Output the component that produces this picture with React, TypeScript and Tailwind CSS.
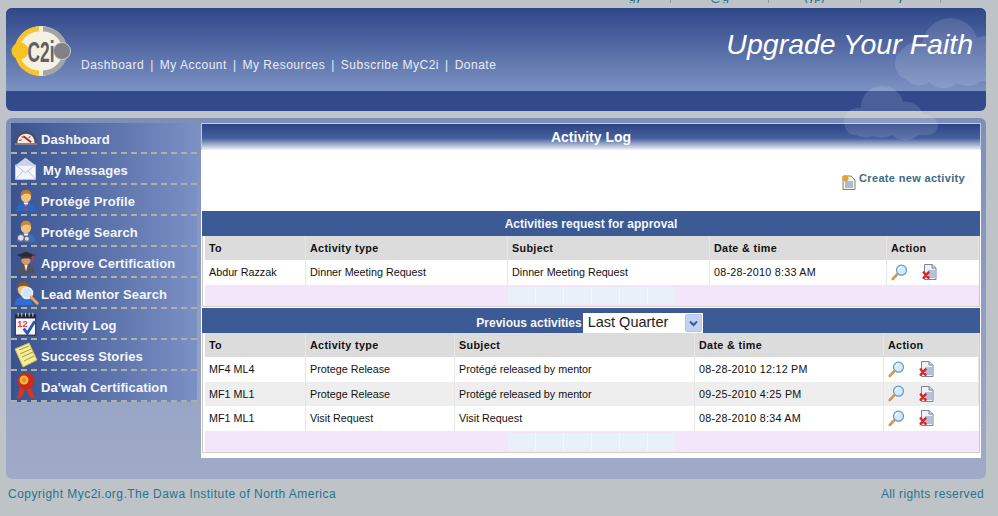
import React from "react";

const Magnifier = () => (
  <svg width="17" height="17" viewBox="0 0 17 17">
    <circle cx="10.5" cy="6.2" r="5" fill="#d5e9fa" stroke="#5a9ccf" strokeWidth="1.2" />
    <path d="M7.5 6a3 3 0 0 1 3-3" stroke="#fff" strokeWidth="1.2" fill="none" />
    <path d="M6.5 10 L1.8 15" stroke="#c79a5a" strokeWidth="2.6" strokeLinecap="round" />
  </svg>
);

const DocDelete = () => (
  <svg width="15" height="16" viewBox="0 0 15 16">
    <path d="M2.5 .5h7.5l4 3.5v11.5H2.5z" fill="#eef1f6" stroke="#7d8699" strokeWidth="1" />
    <path d="M10 .5V4h4" fill="#cdd3df" stroke="#7d8699" strokeWidth="1" />
    <rect x="6" y="6" width="7" height="8" fill="#b4c1d8" />
    <path d="M1.8 8.5l4.6 5.2M6.4 8.5l-4.6 5.2" stroke="#d8262c" strokeWidth="2.6" strokeLinecap="round" />
  </svg>
);

const person = (shirt: string, hair: string) => (
  <>
    <path d="M3 27c0-7 4-10 11-10s11 3 11 10z" fill={shirt} />
    <path d="M11 17l3 5 3-5z" fill="#fff" />
    <path d="M13.2 19h1.6l.6 7h-2.8z" fill="#c8403a" />
    <ellipse cx="14" cy="10" rx="6" ry="7" fill="#f3c27e" />
    <path d="M8 10c-1-6 3-8 6-8s7 2 6 7c-2-3-8-4-12 1z" fill={hair} />
  </>
);

const icons: Record<string, React.ReactNode> = {
  gauge: (
    <svg width="24" height="26" viewBox="0 0 28 28">
      <path d="M1 21C1 11 7 6 14 6s13 5 13 15z" fill="#4a4f5c" />
      <path d="M4 20C4 13 8 9 14 9s10 4 10 11z" fill="#f2ebe0" />
      <path d="M6 17l3-1M9 12l2 2M19 12l-2 2" stroke="#a33" strokeWidth="1.2" />
      <path d="M20 19l-9-7" stroke="#b22222" strokeWidth="2" />
      <rect x="1" y="20" width="26" height="2" fill="#888" />
    </svg>
  ),
  mail: (
    <svg width="23" height="25" viewBox="0 0 26 30">
      <path d="M1 11L13 2l12 9z" fill="#c9d3ea" />
      <rect x="1" y="11" width="24" height="17" fill="#f3f5fb" stroke="#ccd5ea" />
      <path d="M1 11l12 9 12-9M1 28l9-10M25 28l-9-10" stroke="#aeb9d6" strokeWidth="1" fill="none" />
    </svg>
  ),
  profile: <svg width="24" height="28" viewBox="0 0 28 28">{person("#2a67c8", "#b8792b")}</svg>,
  search: (
    <svg width="24" height="28" viewBox="0 0 28 28">
      {person("#3a6fc0", "#c58a33")}
      <circle cx="8" cy="22" r="4" fill="#dde" stroke="#556" />
      <circle cx="15" cy="23" r="3" fill="#dde" stroke="#556" />
    </svg>
  ),
  grad: (
    <svg width="24" height="28" viewBox="0 0 28 28">
      <path d="M4 27c0-7 4-10 10-10s10 3 10 10z" fill="#55525a" />
      <path d="M12 17h4l-2 8z" fill="#eee" />
      <ellipse cx="14" cy="11" rx="5.5" ry="6.5" fill="#d79a64" />
      <path d="M3 6l11-4 11 4-11 4z" fill="#2d2b30" />
      <path d="M8 8v3c4-2 8-2 12 0V8z" fill="#3c3940" />
      <path d="M22 6v7" stroke="#d33" strokeWidth="1.3" />
    </svg>
  ),
  lead: (
    <svg width="26" height="28" viewBox="0 0 28 28">
      <path d="M1 27c0-7 4-9 9-9s10 2 10 9z" fill="#2f6fd0" />
      <ellipse cx="10" cy="10" rx="6" ry="7" fill="#f3c27e" />
      <path d="M4 9c-1-5 3-7 6-7s7 2 6 6c-3-2-8-3-12 1z" fill="#8a5a26" />
      <circle cx="14" cy="14" r="6" fill="#cfe6fa" stroke="#eef" strokeWidth="1.5" />
      <path d="M18.5 18.5L25 25" stroke="#e8a860" strokeWidth="3.2" strokeLinecap="round" />
    </svg>
  ),
  cal: (
    <svg width="23" height="24" viewBox="0 0 24 26">
      <rect x="1" y="3" width="22" height="22" fill="#f7f7fb" stroke="#223" />
      <rect x="1" y="3" width="22" height="4" fill="#1d2238" />
      <path d="M4 1v4M8 1v4M12 1v4M16 1v4M20 1v4" stroke="#ddd" strokeWidth="1" />
      <text x="3" y="16" fontSize="10" fontWeight="700" fontFamily="Liberation Sans" fill="#e2422b">12</text>
      <path d="M10 18l4 5 8-13" stroke="#2756b5" strokeWidth="3" fill="none" />
    </svg>
  ),
  note: (
    <svg width="24" height="26" viewBox="0 0 24 26">
      <path d="M1 7L15 1l8 17-14 7z" fill="#f5ec9c" stroke="#c9bb58" />
      <path d="M5 8l10-4M6 12l11-5M8 15l11-5M10 19l10-5" stroke="#a99b3c" strokeWidth="1" />
    </svg>
  ),
  ribbon: (
    <svg width="22" height="28" viewBox="0 0 22 28">
      <path d="M5 15L2 27l5-2 3-8zM16 15l4 12-5-2-4-8z" fill="#d8361f" />
      <circle cx="11" cy="9" r="8.5" fill="#c92a1a" />
      <circle cx="9" cy="8" r="4.5" fill="#f0b43a" />
      <circle cx="9" cy="8" r="2" fill="#e88a1e" />
    </svg>
  ),
};

const menu: [string, string, string][] = [
  ["gauge", "Dashboard", "w-[30px] pl-[3px]"],
  ["mail", "My Messages", "w-[32px] pl-[3px]"],
  ["profile", "Protégé Profile", "w-[30px] pl-[3px]"],
  ["search", "Protégé Search", "w-[30px] pl-[3px]"],
  ["grad", "Approve Certification", "w-[30px] pl-[3px]"],
  ["lead", "Lead Mentor Search", "w-[30px] pl-[3px]"],
  ["cal", "Activity Log", "w-[30px] pl-[3px]"],
  ["note", "Success Stories", "w-[30px] pl-[3px]"],
  ["ribbon", "Da'wah Certification", "w-[30px] pl-[4px]"],
];

const Logo = () => (
  <svg width="62" height="52" viewBox="0 0 62 52" className="shrink-0">
    <circle cx="31" cy="26" r="25" fill="#f4f1e2" />
    <path d="M29 4A22 22 0 0 0 29 48" fill="none" stroke="#f6c42c" strokeWidth="5" />
    <path d="M33 4A22 22 0 0 1 33 48" fill="none" stroke="#a3a5a8" strokeWidth="5" />
    <circle cx="10" cy="26" r="8.5" fill="#f7c322" />
    <circle cx="52" cy="26" r="8.5" fill="#7f8184" stroke="#c9cacb" />
    <text x="31" y="37" textAnchor="middle" fontFamily="Liberation Sans Narrow, Liberation Sans" fontWeight="700" fontSize="29" fill="#5f6164" textLength="27" lengthAdjust="spacingAndGlyphs">C2i</text>
  </svg>
);

const Pager = () => (
  <div className="flex h-[21px] items-center bg-[#f3e6fb] pl-[303px]">
    <div className="flex h-[17px] gap-px bg-[#f6f6fc]">
      {[0, 1, 2, 3, 4, 5].map((i) => (
        <div key={i} className="w-[27px] bg-[#e8f0fa]" />
      ))}
    </div>
  </div>
);

const Cell = ({ children, head, tint, wide }: { children?: React.ReactNode; head?: boolean; tint?: boolean; wide?: boolean }) => (
  <div
    className={`flex items-center border-r border-[#e6e6e6] pl-[4px] last:border-r-0 ${
      head ? "h-[24px] bg-[#dcdcdc] pt-px font-bold tracking-[0.35px]" : `h-[24.5px] ${tint ? "bg-[#eeeeee]" : "bg-white"}`
    } ${wide ? "tracking-[0.25px]" : ""}`}
  >
    {children}
  </div>
);

const Actions = () => (
  <div className="flex items-center gap-[14px]">
    <Magnifier />
    <DocDelete />
  </div>
);

const Table = ({ cols, rows, heads }: { cols: string; rows: string[][]; heads: string[] }) => (
  <div className="border-x border-b border-x-[#c9c9c9] border-b-[#d8cfc4] pl-[2px] text-[10.75px] text-[#111]">
    <div className={`grid ${cols}`}>
      {heads.map((h) => (
        <Cell head key={h}>{h}</Cell>
      ))}
      {rows.map((r, i) =>
        [...r, ""].map((c, j) => (
          <Cell key={`${i}-${j}`} tint={i === 1} wide={j === 3}>
            {j === 4 ? <Actions /> : c}
          </Cell>
        ))
      )}
    </div>
    <Pager />
  </div>
);

const heads = ["To", "Activity type", "Subject", "Date & time", "Action"];

const Crumb = ({ w, text }: { w: string; text: string }) => (
  <div className={`${w} h-[3px] overflow-hidden border-r border-[#8f989c] text-center text-[12px] leading-[12px] text-[#27667a]`}>
    <div className="-mt-[9px]">{text}</div>
  </div>
);

export default function App() {
  return (
    <div className="relative flex h-[516px] w-[998px] flex-col overflow-hidden bg-[#bdc3c7] font-['Liberation_Sans',sans-serif]">
      <div className="flex h-[8px] items-start pl-[600px]">
        <Crumb w="w-[71px]" text="gy" />
        <Crumb w="w-[98px]" text="@g" />
        <Crumb w="w-[92px]" text="(yp)" />
        <Crumb w="w-[80px]" text="y" />
      </div>

      <header className="mx-[6px] h-[103px] w-[980px] shrink-0 overflow-hidden rounded-[6px] bg-[#324a8c]">
        <div className="flex h-[83px] items-start justify-between bg-[linear-gradient(to_bottom,#2f4689,#7c92c3)] pl-[4px] pr-[13px]">
          <div className="flex items-end pt-[17px]">
            <Logo />
            <nav className="mb-[5px] ml-[9px] flex gap-[6px] text-[12px] leading-[14px] tracking-[0.5px] text-[#e8edf6]">
              <span>Dashboard</span><span>|</span><span>My Account</span><span>|</span><span>My Resources</span><span>|</span><span>Subscribe MyC2i</span><span>|</span><span>Donate</span>
            </nav>
          </div>
          <div className="pt-[18px] text-[28.5px] italic leading-[36px] text-white">Upgrade Your Faith</div>
        </div>
      </header>

      <main className="mx-[6px] mt-[7px] flex h-[361px] w-[980px] shrink-0 items-start gap-[4px] rounded-[6px] bg-[linear-gradient(to_bottom,#7d8fb9,#a0abc8)] pl-[5px] pt-[5px]">
        <aside className="w-[186px] shrink-0">
          {menu.map(([ic, label, box]) => (
            <div
              key={label}
              className="flex h-[31px] items-center border-b-2 border-dashed border-b-[#adb1a2] bg-[linear-gradient(to_right,#3a5390,#7b90c4)] text-[13px] font-bold tracking-[0.1px] text-[#f4f6fb]"
            >
              <div className={`flex ${box} shrink-0 items-center`}>{icons[ic]}</div>
              <span className="pt-[4px]">{label}</span>
            </div>
          ))}
        </aside>

        <section className="h-[335px] w-[780px] shrink-0 bg-white px-px">
          <div className="-mx-px flex h-[27px] items-center justify-center border-x border-t border-[#c3cbe4] bg-[linear-gradient(to_bottom,#2d4387,#46609c_55%,#f2f4f9)] text-[14px] font-bold text-white">
            Activity Log
          </div>
          <div className="flex h-[61px] items-start justify-end pr-[15px] pt-[21px]">
            <svg width="14" height="15" viewBox="0 0 14 15" className="mr-[3px] mt-[4px]">
              <path d="M1 1h8l4 4v9.5H1z" fill="#f5f2e6" stroke="#8a7f6a" />
              <rect x="3" y="6" width="8" height="7" fill="#a9bbdb" />
              <circle cx="3.5" cy="3.5" r="3" fill="#f0a030" />
            </svg>
            <span className="text-[11px] font-bold leading-[14px] tracking-[0.33px] text-[#3d6a80]">Create new activity</span>
          </div>

          <div className="flex h-[25px] items-center justify-center bg-[#3c5a94] text-[12px] font-bold text-[#f4f6fb]">
            Activities request for approval
          </div>
          <Table
            cols="grid-cols-[101px_202px_202px_177px_1fr]"
            heads={heads}
            rows={[["Abdur Razzak", "Dinner Meeting Request", "Dinner Meeting Request", "08-28-2010 8:33 AM"]]}
          />

          <div className="mt-[1.5px] flex h-[25px] items-end justify-center bg-[#3c5a94] pr-[3px] text-[12px] font-bold text-[#f4f6fb]">
            <span className="mb-px">Previous activities</span>
            <div className="ml-px flex h-[20px] w-[120px] items-center justify-between bg-white pl-[5px] pr-px text-[14.5px] font-normal text-[#222]">
              Last Quarter
              <div className="flex h-[18px] w-[17px] items-center justify-center rounded-[2px] border border-[#b4c4e6] bg-[#c3d2f2]">
                <svg width="9" height="7" viewBox="0 0 9 7"><path d="M1 1.5l3.5 3.5L8 1.5" stroke="#3c5a94" strokeWidth="2" fill="none" /></svg>
              </div>
            </div>
          </div>
          <Table
            cols="grid-cols-[101px_149px_240px_189px_1fr]"
            heads={heads}
            rows={[
              ["MF4 ML4", "Protege Release", "Protégé released by mentor", "08-28-2010 12:12 PM"],
              ["MF1 ML1", "Protege Release", "Protégé released by mentor", "09-25-2010 4:25 PM"],
              ["MF1 ML1", "Visit Request", "Visit Request", "08-28-2010 8:34 AM"],
            ]}
          />
        </section>
      </main>

      <footer className="mx-[6px] mt-[8px] flex w-[980px] justify-between px-[2px] text-[12px] leading-[14px] text-[#2a7488]">
        <span className="tracking-[0.46px]">Copyright Myc2i.org.The Dawa Institute of North America</span>
        <span className="tracking-[0.37px]">All rights reserved</span>
      </footer>

      <svg width="998" height="150" viewBox="0 0 998 150" className="pointer-events-none absolute left-0 top-0" aria-hidden="true">
        <defs>
          <clipPath id="hc"><rect x="6" y="8" width="980" height="83" /></clipPath>
        </defs>
        <g clipPath="url(#hc)" fill="#ffffff" fillOpacity="0.12">
          <path d="M907 80a17 17 0 0 1-5-30c4-6 12-9 20-7 3-14 14-25 28-25 13 0 24 9 27 20 4-2 9-3 14-2v45h-10a20 20 0 0 1-24 2 20 20 0 0 1-28-1 16 16 0 0 1-22-2z" />
        </g>
        <path fill="#ffffff" fillOpacity="0.12" d="M856 135c-8 0-12-6-12-14 0-7 6-13 14-13h3c0-13 9-22 21-22 11 0 19 7 21 16 9-1 17 4 20 12 8 0 15 5 15 12 0 6-6 9-12 9h-8c-3 4-9 5-13 5s-10-2-13-5c-4 3-14 4-19 1-4 2-12 2-17-1z" />
      </svg>
    </div>
  );
}
